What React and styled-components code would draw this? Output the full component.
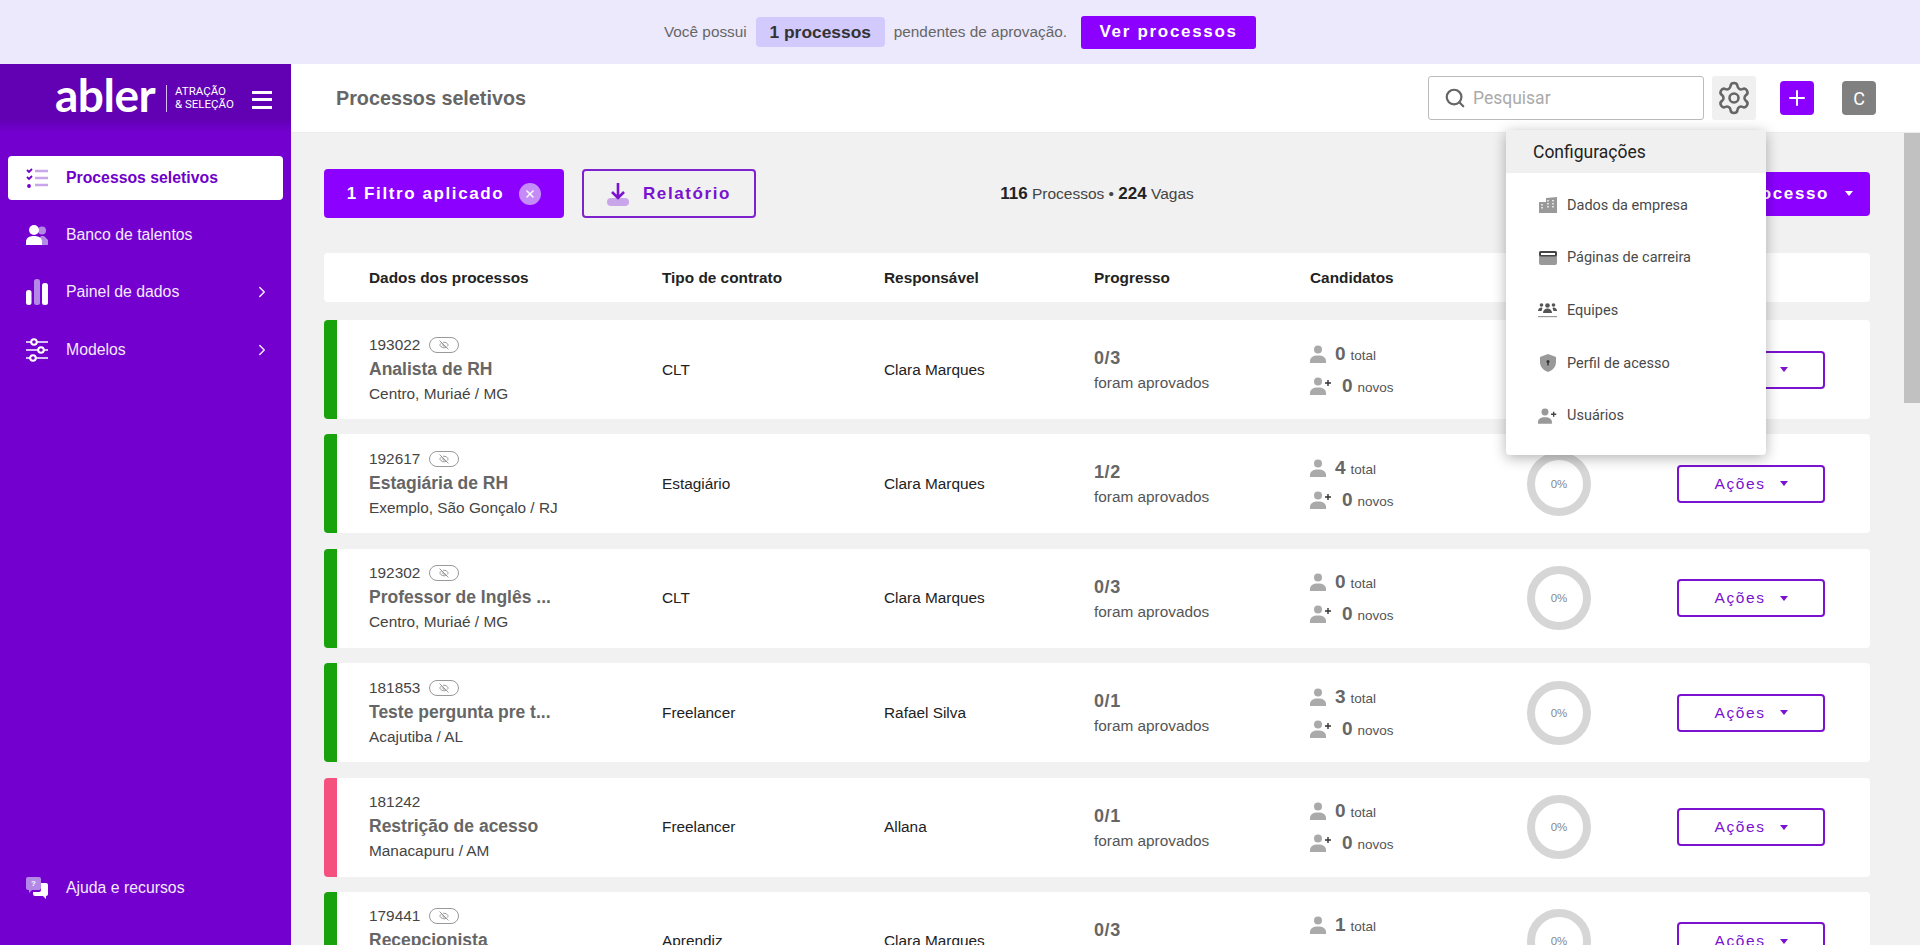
import React from "react"
import styled, { createGlobalStyle } from "styled-components"
import { Search, Settings, Plus, EyeOff, ChevronRight, X } from "lucide-react"

const Global = createGlobalStyle`
  * { box-sizing: border-box; }
  html, body { margin: 0; height: 100%; overflow: hidden; }
  body { font-family: "Liberation Sans", Arial, sans-serif; background: #f1f1f1; }
`

const Page = styled.div`
  height: 100vh;
  display: flex;
  flex-direction: column;
`
const Banner = styled.div`
  height: 64px;
  flex: none;
  background: #ece9fd;
  display: flex;
  align-items: center;
  justify-content: center;
  font-size: 15.36px;
  color: #666;
`
const Pill = styled.span`
  height: 30px;
  width: 129px;
  margin: 0 9px;
  display: flex;
  align-items: center;
  justify-content: center;
  background: #d2c9fd;
  border-radius: 4px;
  color: #333;
  font-weight: 700;
  font-size: 17.4px;
`
const BannerButton = styled.button`
  height: 33px;
  width: 175px;
  margin-left: 14px;
  border: 0;
  border-radius: 3px;
  background: #8c00ff;
  color: #fff;
  font: 700 17px "Liberation Sans", Arial, sans-serif;
  letter-spacing: 1.7px;
`
const Body = styled.div`
  flex: 1;
  min-height: 0;
  display: flex;
`
const Sidebar = styled.aside`
  width: 291px;
  flex: none;
  background: #7300cf;
  display: flex;
  flex-direction: column;
`
const Brand = styled.div`
  height: 69px;
  flex: none;
  background: linear-gradient(#6200b4, #6200b4 80%, #7300cf);
  display: flex;
  align-items: center;
  padding-left: 55px;
  color: #fff;
`
const Logo = styled.span`
  font: 700 46px/1 Lato, sans-serif;
  letter-spacing: -0.5px;
  width: 111px;
  margin-top: -8px;
`
const Tagline = styled.span`
  border-left: 1px solid #d9bdf5;
  padding: 0 0 0 8px;
  font: 400 11.5px/13.5px Roboto, sans-serif;
  width: 85px;
  margin-top: -1px;
`
const Burger = styled.span`
  width: 20px;
  height: 18px;
  margin-left: 1px;
  margin-top: 2px;
  border-top: 3px solid #fff;
  border-bottom: 3px solid #fff;
  display: flex;
  align-items: center;
  &::before {
    content: "";
    width: 100%;
    height: 3px;
    background: #fff;
  }
`
const Nav = styled.nav`
  flex: 1;
  display: flex;
  flex-direction: column;
  gap: 13.2px;
  padding: 23px 8px 35px;
`
const NavItem = styled.div`
  height: 44px;
  border-radius: 4px;
  display: flex;
  align-items: center;
  gap: 18px;
  padding: 0 12px 0 18px;
  font-size: 15.8px;
  font-weight: ${p => (p.$active ? 700 : 400)};
  color: ${p => (p.$active ? "#6f00c9" : "#f4eafc")};
  background: ${p => (p.$active ? "#fff" : "transparent")};
  margin-top: ${p => (p.$bottom ? "auto" : 0)};
  svg { flex: none; }
`
const NavLabel = styled.span`
  flex: 1;
`
const Main = styled.div`
  flex: 1;
  min-width: 0;
  display: flex;
  flex-direction: column;
`
const TopBar = styled.header`
  height: 69px;
  flex: none;
  position: relative;
  background: #fff;
  border-bottom: 1px solid #ececec;
  display: flex;
  align-items: center;
  padding: 0 44px 0 45px;
`
const Title = styled.h1`
  flex: 1;
  margin: 0;
  font-size: 19.75px;
  font-weight: 700;
  color: #666;
`
const SearchBox = styled.div`
  width: 276px;
  height: 44px;
  border: 1px solid #bbb;
  border-radius: 3px;
  display: flex;
  align-items: center;
  gap: 7px;
  padding-left: 15px;
  font: 400 17.5px Roboto, sans-serif;
  color: #aaa;
  svg { color: #666; }
`
const GearBox = styled.div`
  width: 44px;
  height: 44px;
  margin: 0 24px 0 8px;
  background: #f0f0f0;
  border-radius: 3px;
  display: flex;
  align-items: center;
  justify-content: center;
  color: #666;
`
const SquareButton = styled.div`
  width: 34px;
  height: 34px;
  border-radius: 4px;
  display: flex;
  align-items: center;
  justify-content: center;
  background: ${p => p.$bg};
  color: #fff;
  font: 400 18px Roboto, sans-serif;
  margin-left: ${p => p.$gap || 0}px;
`
const Menu = styled.div`
  position: absolute;
  z-index: 5;
  top: 66px;
  right: 154px;
  width: 260px;
  height: 325px;
  border-radius: 4px;
  background: #fff;
  overflow: hidden;
  box-shadow: 0 3px 14px rgba(0, 0, 0, 0.3);
  font-family: Roboto, sans-serif;
`
const MenuHead = styled.div`
  height: 43px;
  background: #f0f0f0;
  display: flex;
  align-items: center;
  padding-left: 27px;
  font-size: 17.5px;
  color: #222;
`
const MenuList = styled.div`
  padding-top: 6px;
`
const MenuItem = styled.div`
  height: 52.6px;
  display: flex;
  align-items: center;
  gap: 9px;
  padding-left: 31px;
  font-size: 14.5px;
  color: #4a4a4a;
`
const IconSlot = styled.span`
  width: 21px;
  display: flex;
  justify-content: center;
`
const Content = styled.div`
  flex: 1;
  min-height: 0;
  display: flex;
`
const Scroll = styled.div`
  flex: 1;
  min-width: 0;
  overflow: hidden;
  padding: 36px 34px 0 33px;
`
const Track = styled.div`
  width: 16px;
  flex: none;
  background: #f1f1f1;
`
const Thumb = styled.div`
  height: 270px;
  background: #c1c1c1;
`
const Toolbar = styled.div`
  height: 49px;
  display: grid;
  grid-template-columns: 1fr 1fr 1fr;
  align-items: center;
  margin-bottom: 35px;
`
const ToolGroup = styled.div`
  display: flex;
  gap: 18px;
`
const Counts = styled.div`
  text-align: center;
  font-size: 15.5px;
  color: #444;
  b { color: #222; font-size: 17px; }
`
const BaseButton = styled.button`
  display: flex;
  align-items: center;
  justify-content: center;
  border-radius: 4px;
  font: 700 17px "Liberation Sans", Arial, sans-serif;
  letter-spacing: 1.6px;
`
const FilterButton = styled(BaseButton)`
  width: 240px;
  height: 49px;
  border: 0;
  gap: 15px;
  background: #8c00ff;
  color: #fff;
`
const ClearDot = styled.span`
  width: 22px;
  height: 22px;
  border-radius: 50%;
  background: #c58bf7;
  display: flex;
  align-items: center;
  justify-content: center;
`
const ReportButton = styled(BaseButton)`
  width: 174px;
  height: 49px;
  gap: 14px;
  border: 2px solid #7e22ce;
  background: transparent;
  color: #7a12d0;
`
const NewButton = styled(BaseButton)`
  justify-self: end;
  height: 44px;
  padding: 0 17px 0 24px;
  border: 0;
  gap: 16px;
  background: #8c00ff;
  color: #fff;
`
const Caret = styled.i`
  width: 0;
  height: 0;
  border-left: 4.5px solid transparent;
  border-right: 4.5px solid transparent;
  border-top: 5px solid currentColor;
`
const Cols = styled.div`
  display: grid;
  grid-template-columns: 293px 222px 210px 216px 217px 150px 1fr;
  align-items: center;
`
const TableHead = styled(Cols)`
  height: 49px;
  margin-bottom: 18px;
  padding-left: 45px;
  border-radius: 4px;
  background: #fff;
  font-size: 15.36px;
  font-weight: 700;
  color: #222;
`
const Row = styled(Cols)`
  height: 99px;
  margin-bottom: 15.4px;
  border-radius: 4px;
  background: #fff;
  border-left: 13px solid ${p => p.$status};
  padding-left: 32px;
  font-size: 15.36px;
  color: #222;
`
const Info = styled.div`
  display: flex;
  flex-direction: column;
  gap: 5px;
`
const IdLine = styled.div`
  display: flex;
  align-items: center;
  gap: 9px;
  height: 20px;
  color: #444;
`
const Eye = styled.span`
  width: 30px;
  height: 16px;
  border: 1px solid #999;
  border-radius: 8px;
  display: flex;
  align-items: center;
  justify-content: center;
  color: #888;
`
const Name = styled.div`
  height: 20px;
  line-height: 19px;
  font-size: 17.5px;
  font-weight: 700;
  color: #666;
`
const Place = styled.div`
  height: 20px;
  line-height: 18px;
  color: #444;
`
const Progress = styled.div`
  display: flex;
  flex-direction: column;
  gap: 5px;
  padding-top: 1px;
  color: #555;
  b { font-size: 18px; color: #666; letter-spacing: 0.6px; }
`
const Candidates = styled.div`
  display: flex;
  flex-direction: column;
  gap: 12px;
`
const CandLine = styled.div`
  height: 20px;
  display: flex;
  align-items: center;
  gap: ${p => p.$gap}px;
  font-size: 13.5px;
  color: #555;
  b { font-size: 19px; color: #666; margin-right: 5px; }
`
const Donut = styled.div`
  width: 64px;
  height: 64px;
  border: 8px solid #d6d6d6;
  border-radius: 50%;
  display: flex;
  align-items: center;
  justify-content: center;
  font-size: 11.5px;
  color: #888;
`
const ActionButton = styled(BaseButton)`
  width: 148px;
  height: 38px;
  gap: 14px;
  border: 2px solid #7a12d0;
  background: #fff;
  color: #7a12d0;
  font-weight: 400;
  font-size: 15.5px;
`

const ListCheck = () => (
  <svg width="22" height="22" viewBox="0 0 22 22">
    <path d="M1 3l2 2 3-3M1 10l2 2 3-3" fill="none" stroke="#6f00c9" strokeWidth="1.8" />
    <circle cx="3" cy="19" r="1.9" fill="#6f00c9" />
    <path d="M9 4h13M9 11h13M9 18h13" stroke="#c9a6ea" strokeWidth="2.4" />
  </svg>
)
const People = () => (
  <svg width="22" height="22" viewBox="0 0 22 22">
    <circle cx="16" cy="6.500" r="4" fill="#b488e6" />
    <path d="M12 21v-5l3-4h3l4 4v5z" fill="#b488e6" />
    <circle cx="8" cy="6" r="5" fill="#fff" />
    <path d="M0 21v-3c0-4 3-6 8-6s8 2 8 6v3z" fill="#fff" />
  </svg>
)
const Bars = () => (
  <svg width="22" height="26" viewBox="0 0 22 26">
    <rect x="0" y="11" width="5.500" height="15" rx="2.500" fill="#fff" />
    <rect x="8" y="0" width="6" height="26" rx="2.500" fill="#b488e6" />
    <rect x="16" y="4" width="6" height="22" rx="2.500" fill="#fff" />
  </svg>
)
const Sliders = () => (
  <svg width="22" height="24" viewBox="0 0 22 24" fill="none">
    <path d="M0 4h22M0 12h22M0 20h22" stroke="#d9bdf5" strokeWidth="2" />
    <circle cx="8" cy="4" r="2.800" fill="#7300cf" stroke="#fff" strokeWidth="2" />
    <circle cx="15" cy="12" r="2.800" fill="#7300cf" stroke="#fff" strokeWidth="2" />
    <circle cx="7" cy="20" r="2.800" fill="#7300cf" stroke="#fff" strokeWidth="2" />
  </svg>
)
const HelpChat = () => (
  <svg width="22" height="22" viewBox="0 0 22 22">
    <path d="M2 0h11a2 2 0 0 1 2 2v9a2 2 0 0 1-2 2H6l-3 3v-3H2a2 2 0 0 1-2-2V2a2 2 0 0 1 2-2z" fill="#b488e6" />
    <path d="M12 6h8a2 2 0 0 1 2 2v9a2 2 0 0 1-2 2v3l-3-3h-8a2 2 0 0 1-2-2v-2h6a2 2 0 0 0 2-2V6z" fill="#fff" />
    <text x="5" y="9" fontSize="8" fontWeight="700" fill="#fff" fontFamily="Liberation Sans">?</text>
  </svg>
)
const Download = () => (
  <svg width="22" height="24" viewBox="0 0 22 24">
    <rect x="0" y="16" width="22" height="8" rx="4" fill="#c9a6ea" />
    <path d="M11 1v15M5 10l6 6 6-6" fill="none" stroke="#7a12d0" strokeWidth="2.600" />
  </svg>
)
const Person = ({ size = 16 }) => (
  <svg width={size} height={size + 2} viewBox="0 0 16 18" fill="#aaa">
    <circle cx="8" cy="4.500" r="4" />
    <path d="M0 18v-2c0-3.500 3-5.500 8-5.500s8 2 8 5.500v2z" />
  </svg>
)
const PersonAdd = () => (
  <svg width="23" height="18" viewBox="0 0 23 18">
    <circle cx="8" cy="4.500" r="4" fill="#aaa" />
    <path d="M0 18v-2c0-3.500 3-5.500 8-5.500s8 2 8 5.500v2z" fill="#aaa" />
    <path d="M18 3v6M15 6h6" stroke="#333" strokeWidth="1.400" />
  </svg>
)
const Building = () => (
  <svg width="18" height="16" viewBox="0 0 18 16" fill="#999">
    <path d="M0 5h7V1l11-1v16H0z" />
    <path d="M3 7v1.500M3 10v1.500M9 3v1.500M9 6v1.500M9 9v1.500M14 3v1.500M14 6v1.500M14 9v1.500" stroke="#fff" strokeWidth="1.400" />
  </svg>
)
const Browser = () => (
  <svg width="18" height="14" viewBox="0 0 18 14">
    <rect width="18" height="14" rx="2" fill="#999" />
    <rect y="0" width="18" height="5.500" rx="2" fill="#444" />
    <rect x="2" y="2" width="14" height="2" fill="#fff" />
  </svg>
)
const Teams = () => (
  <svg width="19" height="16" viewBox="0 0 19 16" fill="#555">
    <circle cx="9.500" cy="3.500" r="2.300" />
    <circle cx="3.500" cy="3" r="1.800" />
    <circle cx="15.500" cy="3" r="1.800" />
    <path d="M5 11c0-3 2-4.500 4.500-4.500S14 8 14 11z" />
    <path d="M0 9c0-2 1.500-3.500 3.500-3.500l1 .5L3.500 9zM19 9c0-2-1.500-3.500-3.500-3.500l-1 .5L15.500 9z" />
    <rect y="14" width="19" height="1.200" fill="#999" />
  </svg>
)
const Shield = () => (
  <svg width="16" height="18" viewBox="0 0 16 18">
    <path d="M8 0l8 3v5c0 5-3.500 8.500-8 10-4.500-1.500-8-5-8-10V3z" fill="#999" />
    <circle cx="8" cy="7.500" r="1.500" fill="#333" />
    <rect x="7.300" y="8" width="1.400" height="3.500" fill="#333" />
  </svg>
)
const UserPlus = () => (
  <svg width="20" height="16" viewBox="0 0 23 18">
    <circle cx="8" cy="4.500" r="4" fill="#999" />
    <path d="M0 18v-2c0-3.500 3-5.500 8-5.500s8 2 8 5.500v2z" fill="#999" />
    <path d="M18 4v6M15 7h6" stroke="#444" strokeWidth="1.600" />
  </svg>
)

const GREEN = "#18a20b"
const PINK = "#f5517f"

const processes = [
  { id: "193022", hidden: true, name: "Analista de RH", place: "Centro, Muriaé / MG", contract: "CLT", owner: "Clara Marques", progress: "0/3", total: 0, status: GREEN },
  { id: "192617", hidden: true, name: "Estagiária de RH", place: "Exemplo, São Gonçalo / RJ", contract: "Estagiário", owner: "Clara Marques", progress: "1/2", total: 4, status: GREEN },
  { id: "192302", hidden: true, name: "Professor de Inglês ...", place: "Centro, Muriaé / MG", contract: "CLT", owner: "Clara Marques", progress: "0/3", total: 0, status: GREEN },
  { id: "181853", hidden: true, name: "Teste pergunta pre t...", place: "Acajutiba / AL", contract: "Freelancer", owner: "Rafael Silva", progress: "0/1", total: 3, status: GREEN },
  { id: "181242", hidden: false, name: "Restrição de acesso", place: "Manacapuru / AM", contract: "Freelancer", owner: "Allana", progress: "0/1", total: 0, status: PINK },
  { id: "179441", hidden: true, name: "Recepcionista", place: "", contract: "Aprendiz", owner: "Clara Marques", progress: "0/3", total: 1, status: GREEN },
]

const settings = [
  { label: "Dados da empresa", icon: <Building /> },
  { label: "Páginas de carreira", icon: <Browser /> },
  { label: "Equipes", icon: <Teams /> },
  { label: "Perfil de acesso", icon: <Shield /> },
  { label: "Usuários", icon: <UserPlus /> },
]

export default function App() {
  return (
    <Page>
      <Global />
      <Banner>
        Você possui
        <Pill>1 processos</Pill>
        pendentes de aprovação.
        <BannerButton>Ver processos</BannerButton>
      </Banner>
      <Body>
        <Sidebar>
          <Brand>
            <Logo>abler</Logo>
            <Tagline>ATRAÇÃO<br />&amp; SELEÇÃO</Tagline>
            <Burger />
          </Brand>
          <Nav>
            <NavItem $active><ListCheck /><NavLabel>Processos seletivos</NavLabel></NavItem>
            <NavItem><People /><NavLabel>Banco de talentos</NavLabel></NavItem>
            <NavItem><Bars /><NavLabel>Painel de dados</NavLabel><ChevronRight size={18} /></NavItem>
            <NavItem><Sliders /><NavLabel>Modelos</NavLabel><ChevronRight size={18} /></NavItem>
            <NavItem $bottom><HelpChat /><NavLabel>Ajuda e recursos</NavLabel></NavItem>
          </Nav>
        </Sidebar>
        <Main>
          <TopBar>
            <Title>Processos seletivos</Title>
            <SearchBox><Search size={22} strokeWidth={2.4} />Pesquisar</SearchBox>
            <GearBox><Settings size={36} strokeWidth={1.7} /></GearBox>
            <SquareButton $bg="#8c00ff"><Plus size={24} strokeWidth={2} /></SquareButton>
            <SquareButton $bg="#808080" $gap={28}>C</SquareButton>
            <Menu>
              <MenuHead>Configurações</MenuHead>
              <MenuList>
                {settings.map(item => (
                  <MenuItem key={item.label}>
                    <IconSlot>{item.icon}</IconSlot>
                    {item.label}
                  </MenuItem>
                ))}
              </MenuList>
            </Menu>
          </TopBar>
          <Content>
            <Scroll>
              <Toolbar>
                <ToolGroup>
                  <FilterButton>
                    1 Filtro aplicado
                    <ClearDot><X size={12} strokeWidth={3} /></ClearDot>
                  </FilterButton>
                  <ReportButton><Download />Relatório</ReportButton>
                </ToolGroup>
                <Counts><b>116</b> Processos • <b>224</b> Vagas</Counts>
                <NewButton>Novo processo<Caret /></NewButton>
              </Toolbar>
              <TableHead>
                <span>Dados dos processos</span>
                <span>Tipo de contrato</span>
                <span>Responsável</span>
                <span>Progresso</span>
                <span>Candidatos</span>
              </TableHead>
              {processes.map(p => (
                <Row key={p.id} $status={p.status}>
                  <Info>
                    <IdLine>
                      {p.id}
                      {p.hidden && <Eye><EyeOff size={10} /></Eye>}
                    </IdLine>
                    <Name>{p.name}</Name>
                    <Place>{p.place}</Place>
                  </Info>
                  <span>{p.contract}</span>
                  <span>{p.owner}</span>
                  <Progress>
                    <b>{p.progress}</b>
                    foram aprovados
                  </Progress>
                  <Candidates>
                    <CandLine $gap={9}><Person /><span><b>{p.total}</b>total</span></CandLine>
                    <CandLine $gap={9}><PersonAdd /><span><b>0</b>novos</span></CandLine>
                  </Candidates>
                  <Donut>0%</Donut>
                  <ActionButton>Ações<Caret /></ActionButton>
                </Row>
              ))}
            </Scroll>
            <Track><Thumb /></Track>
          </Content>
        </Main>
      </Body>
    </Page>
  )
}
